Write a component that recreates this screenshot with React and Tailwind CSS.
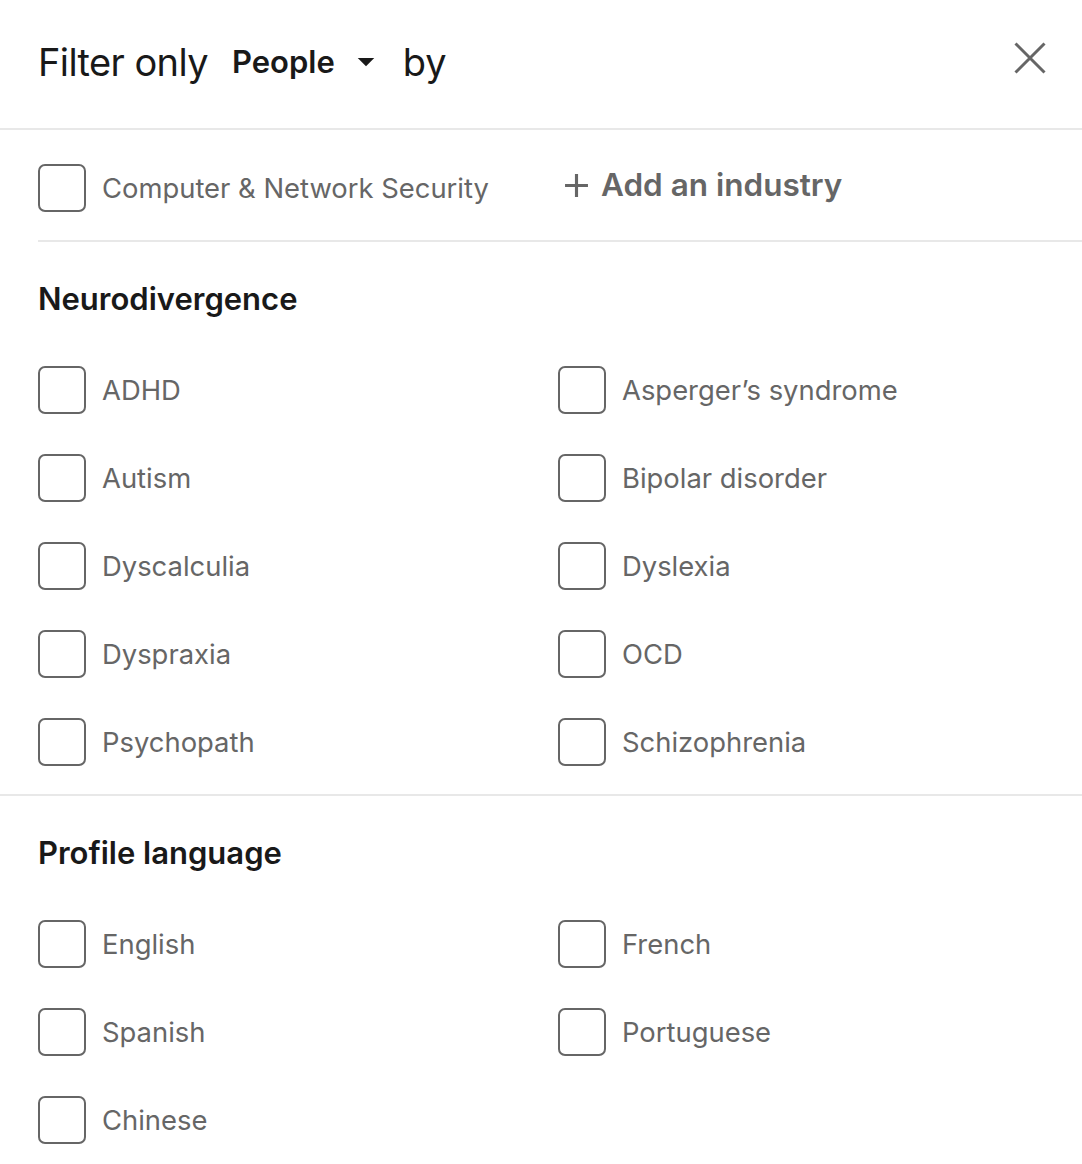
import React from "react";

const neuro = [
  "ADHD",
  "Asperger\u2019s syndrome",
  "Autism",
  "Bipolar disorder",
  "Dyscalculia",
  "Dyslexia",
  "Dyspraxia",
  "OCD",
  "Psychopath",
  "Schizophrenia",
];

const languages = ["English", "French", "Spanish", "Portuguese", "Chinese"];

function Checkbox({ label }) {
  return (
    <label className="flex items-center h-[48px]">
      <span className="w-[48px] h-[48px] shrink-0 rounded-[7px] border-2 border-[#666666] bg-white" />
      <span className="ml-[16px] mt-[2px] text-[27.4px] text-[#666666] leading-none">{label}</span>
    </label>
  );
}

function Section({ title, items, border }) {
  return (
    <div className={border ? "pl-[38px] pt-[41px] pb-[28px] border-b-2 border-[#e8e8e8]" : "pl-[38px] pt-[41px] pb-[28px]"}>
      <h2 className="text-[31px] font-semibold text-[#191919] leading-none">{title}</h2>
      <div className="grid grid-cols-[520px_1fr] gap-y-[40px] mt-[52px]">
        {items.map((item) => (
          <Checkbox key={item} label={item} />
        ))}
      </div>
    </div>
  );
}

export default function App() {
  return (
    <div className="w-[1082px] min-h-[1164px] bg-white" style={{ fontFamily: "Inter, 'Noto Sans', sans-serif" }}>
      {/* header */}
      <div className="h-[130px] flex items-center pl-[38px] pr-[36px] border-b-2 border-[#e8e8e8]">
        <span className="text-[38px] text-[#191919] tracking-[-0.6px] -mt-[4px]">Filter only</span>
        <button className="flex items-center ml-[24px] -mt-[4px]">
          <span className="text-[31px] font-semibold text-[#191919]">People</span>
          <svg viewBox="0 0 16 16" className="w-[22px] h-[22px] ml-[20px] text-[#191919]" fill="currentColor">
            <path d="M2 5h12l-6 6z" />
          </svg>
        </button>
        <span className="text-[38px] text-[#191919] ml-[26px] -mt-[4px]">by</span>
        <button className="ml-auto w-[32px] h-[32px] -mt-[13px] flex items-center justify-center text-[#666666]">
          <svg viewBox="0 0 32 32" className="w-[32px] h-[32px]" fill="none" stroke="currentColor" strokeWidth="3">
            <path d="M1.5 1.5l29 29M30.5 1.5l-29 29" />
          </svg>
        </button>
      </div>

      {/* industry */}
      <div className="pl-[38px]">
        <div className="flex items-center pt-[34px] pb-[28px] border-b-2 border-[#e8e8e8]">
          <div className="w-[526px] flex">
            <Checkbox label="Computer & Network Security" />
          </div>
          <button className="flex items-center -mt-[6px] text-[#666666]">
            <svg viewBox="0 0 24 24" className="w-[25px] h-[25px]" fill="none" stroke="currentColor" strokeWidth="3">
              <path d="M12 1v22M1 12h22" />
            </svg>
            <span className="ml-[12px] text-[31.5px] font-semibold">Add an industry</span>
          </button>
        </div>
      </div>

      <Section title="Neurodivergence" items={neuro} border />
      <Section title="Profile language" items={languages} />
    </div>
  );
}
